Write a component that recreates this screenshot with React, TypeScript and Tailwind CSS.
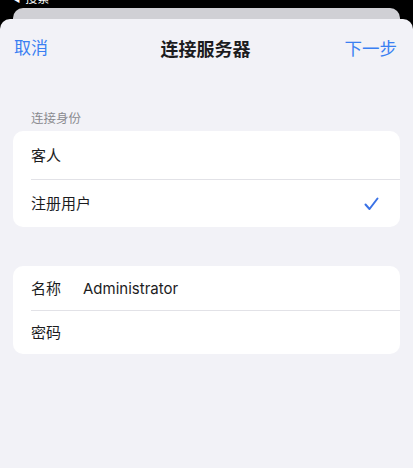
import React from 'react';

const BLUE = 'text-[#3a7ff2]';

const Row: React.FC<{ children: React.ReactNode; divider?: boolean; h: string }> = ({ children, divider, h }) => (
  <div className={`relative flex items-center pl-[18px] pr-[21px] pt-[2px] ${h}`}>
    {divider && <div className="absolute top-0 left-[18px] right-0 h-px bg-[#e2e2e7]" />}
    {children}
  </div>
);

const App: React.FC = () => {
  return (
    <div className="w-full h-[468px] bg-black overflow-hidden flex flex-col font-['Inter','Noto_Sans_CJK_SC',sans-serif] text-[#1c1c1e]">
      {/* status bar remnant */}
      <div className="h-[8px] relative overflow-hidden">
        <div className="flex items-center gap-[5px] pl-[12px] -mt-[8px] text-white text-[12px] leading-[14px]">
          <span className="text-[9px]">◀</span>
          <span>搜索</span>
        </div>
      </div>

      {/* stacked sheet behind */}
      <div className="mx-[13px] h-[11px] rounded-t-[10px] bg-[#d0d0d5]" />

      {/* main sheet */}
      <div className="flex-1 bg-[#f2f2f7] rounded-t-[10px]">
        <header className="h-[60px] flex items-center pl-[14px] pr-[16px]">
          <div className="flex-1">
            <button className={`text-[17px] ${BLUE}`}>取消</button>
          </div>
          <h1 className="text-[18px] font-semibold">连接服务器</h1>
          <div className="flex-1 flex justify-end">
            <button className={`text-[17.5px] ${BLUE}`}>下一步</button>
          </div>
        </header>

        <p className="mt-[32px] mb-[4px] pl-[31px] text-[12.5px] leading-[16px] text-[#8a8a8f]">连接身份</p>

        <div className="mx-[13px] rounded-[10px] bg-white text-[15px]">
          <Row h="h-[48px]">客人</Row>
          <Row h="h-[48px]" divider>
            <span className="flex-1">注册用户</span>
            <svg width="15" height="14" viewBox="0 0 15 14" fill="none">
              <path d="M1.5 7.5 L5.5 12 L13.5 1.5" stroke="#3a72e6" strokeWidth="2" strokeLinecap="round" strokeLinejoin="round" />
            </svg>
          </Row>
        </div>

        <div className="mt-[39px] mx-[13px] rounded-[10px] bg-white text-[15px]">
          <Row h="h-[44px]">
            <span className="w-[52px]">名称</span>
            <span>Administrator</span>
          </Row>
          <Row h="h-[44px]" divider>
            <span>密码</span>
          </Row>
        </div>
      </div>
    </div>
  );
};

export default App;
